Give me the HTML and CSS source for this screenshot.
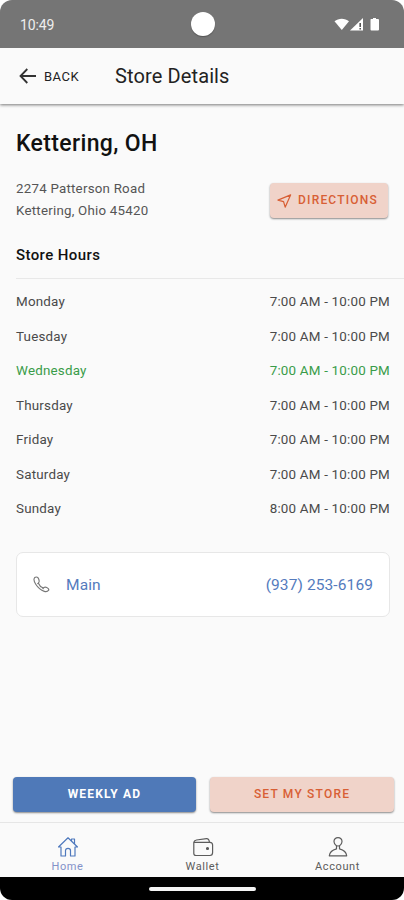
FILE: index.html
```html
<!DOCTYPE html>
<html lang="en">
<head>
<meta charset="utf-8">
<title>Store Details</title>
<link rel="stylesheet" href="styles.css">
</head>
<body>
<div class="phone">
  <div class="status">
    <span class="clock">10:49</span>
    <span class="camera"></span>
    <svg class="signals" width="46" height="16" viewBox="0 0 46 16">
      <path d="M0.500 4.200C4.500 .8 11 .8 15 4.200L7.800 13z" fill="#fff"/>
      <path d="M16 13.500L29 1V13.500z" fill="#fff"/>
      <path d="M26.200 6v4M26.200 11v1.400" stroke="#555" stroke-width="1.600"/>
      <path d="M37 2h2V1h3v1h2q1 0 1 1v9.500q0 1-1 1h-6.500q-1 0-1-1V3q0-1 .5-1z" fill="#fff"/>
    </svg>
  </div>
  <header class="header">
    <svg class="back-icon" width="18" height="16" viewBox="0 0 18 16" fill="none" stroke="#333" stroke-width="1.800"><path d="M8.300 1L1.500 8l6.800 7M1.500 8H17"/></svg>
    <span class="back">BACK</span>
    <span class="title">Store Details</span>
  </header>
  <main class="content">
    <h1 class="name">Kettering, OH</h1>
    <div class="location">
      <div class="address"><div>2274 Patterson Road</div><div>Kettering, Ohio 45420</div></div>
      <button class="button peach directions">
        <svg width="15" height="16" viewBox="0 0 16 16" fill="none" stroke="#d85f35" stroke-width="1.300" stroke-linejoin="round"><path d="M14.500 1.500L1 7L7 8.600L8.700 14.600z"/></svg>
        <span>DIRECTIONS</span>
      </button>
    </div>
    <h2 class="subhead">Store Hours</h2>
    <div class="hours">
      <div class="day"><span>Monday</span><span class="time">7:00 AM - 10:00 PM</span></div>
      <div class="day"><span>Tuesday</span><span class="time">7:00 AM - 10:00 PM</span></div>
      <div class="day today"><span>Wednesday</span><span class="time">7:00 AM - 10:00 PM</span></div>
      <div class="day"><span>Thursday</span><span class="time">7:00 AM - 10:00 PM</span></div>
      <div class="day"><span>Friday</span><span class="time">7:00 AM - 10:00 PM</span></div>
      <div class="day"><span>Saturday</span><span class="time">7:00 AM - 10:00 PM</span></div>
      <div class="day"><span>Sunday</span><span class="time">8:00 AM - 10:00 PM</span></div>
    </div>
    <div class="phone-card">
      <svg width="17" height="17" viewBox="0 0 18 18" fill="none" stroke="#777" stroke-width="1.200" stroke-linejoin="round"><path d="M1.800 1.600C.6 3 1 5.800 2.900 8.700C5 12 8.500 15 12 16.300C14 17 15.600 16.400 16.600 15Q17 14.200 16.200 13.300Q14 11.300 12.200 11.900L10.900 12.800C9.400 12.100 6.400 9.400 5.700 7.600L6.300 6.400Q7 4.600 5.400 2Q4.600 1 3.500 1Q2.500 1 1.800 1.600z"/><path d="M5.700 7.600L4.600 8.300M10.900 12.800L10.300 13.900"/></svg>
      <span class="label">Main</span>
      <span class="number">(937) 253-6169</span>
    </div>
  </main>
  <div class="actions">
    <button class="button blue">WEEKLY AD</button>
    <button class="button peach">SET MY STORE</button>
  </div>
  <nav class="tabs">
    <div class="tab active">
      <svg width="22" height="22" viewBox="0 0 22 22" fill="none" stroke="currentColor" stroke-width="1.200" stroke-linejoin="round"><path d="M1.500 11L11 1.800L20.500 11H18V20H13.500V14.500Q13.500 12.300 11 12.300Q8.500 12.300 8.500 14.500V20H4V11z"/><path d="M14.500 5V3H17.500V8"/></svg>
      <span>Home</span>
    </div>
    <div class="tab">
      <svg width="22" height="22" viewBox="0 0 22 22" fill="none" stroke="currentColor" stroke-width="1.200" stroke-linejoin="round"><path d="M1.800 6.300H18Q20.600 6.500 20.600 9V16.500Q20.600 19.500 18 19.500H4Q1.800 19.500 1.800 17.500V6.300Q2 4.500 4.500 4L14.500 2.600Q17 2.500 17.500 6.300"/><circle cx="15.500" cy="12.500" r="1" fill="currentColor"/></svg>
      <span>Wallet</span>
    </div>
    <div class="tab">
      <svg width="22" height="22" viewBox="0 0 22 22" fill="none" stroke="currentColor" stroke-width="1.200" stroke-linejoin="round"><path d="M11 1.600C8.600 1.600 6.900 3.300 7 5.500C7.100 7.800 8.900 10 11 10S14.900 7.800 15 5.500C15.100 3.300 13.400 1.600 11 1.600z"/><path d="M9.500 9.800V12.800Q2.800 14.500 2.300 19.800H19.700Q19.200 14.500 12.500 12.800V9.800"/></svg>
      <span>Account</span>
    </div>
  </nav>
  <div class="gesture"><span class="pill"></span></div>
</div>
</body>
</html>
```
FILE: styles.css
```css
* { box-sizing: border-box; }
body { margin: 0; background: #fff; font-family: Roboto, sans-serif; }
.phone { width: 404px; height: 900px; display: flex; flex-direction: column; background: #fafafa; border-radius: 12px; overflow: hidden; white-space: nowrap; }
.status { height: 48px; flex: none; display: grid; grid-template-columns: 1fr 24px 1fr; align-items: center; padding: 0 24px 0 20px; background: #757575; color: #eee; }
.clock { font-size: 14px; letter-spacing: -.15px; padding-top: 2px; }
.camera { width: 24px; height: 24px; margin-left: 3px; border-radius: 50%; background: #fff; box-shadow: 0 1px 1px #555; }
.signals { justify-self: end; margin-top: 2px; }
.header { height: 56px; flex: none; display: flex; align-items: center; padding-left: 19px; box-shadow: 0 1px 3px #777; background: #fafafa; color: #222; }
.back { width: 71px; margin-left: 7px; font-size: 13px; letter-spacing: .5px; }
.title { font-size: 20px; letter-spacing: .12px; }
.content { flex: 1; padding: 24px 14px 0 16px; }
.name { height: 32px; margin: 0; font-size: 23px; line-height: 32px; font-weight: 500; letter-spacing: .35px; color: #111; }
.location { display: flex; justify-content: space-between; margin-top: 18px; }
.address { font-size: 13.300px; line-height: 21.500px; letter-spacing: .24px; color: #555; }
.button { height: 35px; border: 0; border-radius: 4px; padding: 0; font: 500 12px/35px Roboto, sans-serif; letter-spacing: 1.200px; box-shadow: 0 1px 2px #888; }
.peach { background: #f0d3c9; color: #d85f35; }
.blue { background: #4f79b8; color: #fff; font-weight: 700; }
.directions { width: 118px; margin: 5px 2px 0 0; display: flex; align-items: center; gap: 6px; padding-left: 7px; }
.subhead { height: 24px; margin: 22px 0 0; font-size: 15px; line-height: 24px; font-weight: 500; letter-spacing: .4px; color: #111; }
.hours { margin: 11px -14px 0 0; padding: 5.400px 14px 0 0; border-top: 1px solid #e8e8e8; }
.day { height: 34.500px; display: flex; justify-content: space-between; align-items: center; font-size: 13.400px; letter-spacing: .2px; color: #4a4a4a; }
.today { color: #399c49; }
.phone-card { height: 65px; margin-top: 26.400px; display: flex; align-items: center; padding: 0 16px; border: 1px solid #e7e7e7; border-radius: 7px; background: #fff; color: #547bbd; font-size: 15.500px; letter-spacing: .1px; }
.label { margin-left: 16px; }
.number { margin-left: auto; }
.actions { flex: none; height: 45px; display: grid; grid-template-columns: 183px 184px; gap: 14px; padding-left: 13px; }
.tabs { flex: none; height: 55px; display: grid; grid-template-columns: repeat(3, 135px); border-top: 1px solid #e6e6e6; background: #fafafa; }
.tab { display: flex; flex-direction: column; align-items: center; padding-top: 13px; color: #5c5c5c; font-size: 11px; line-height: 14px; letter-spacing: .6px; }
.tab span { margin-top: 2px; }
.active { color: #4f79bd; }
.active span { color: #8291c9; }
.gesture { flex: none; height: 23px; display: flex; justify-content: center; align-items: center; background: #000; }
.pill { width: 107px; height: 4px; border-radius: 2px; background: #f5f5f5; }
```
